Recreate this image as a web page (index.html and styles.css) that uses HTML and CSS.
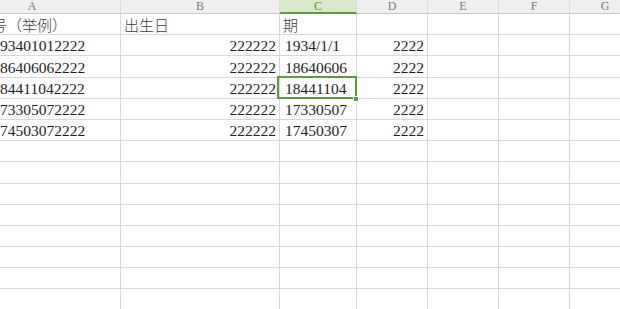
FILE: index.html
```html
<!DOCTYPE html>
<html lang="zh-CN">
<head>
<meta charset="utf-8">
<title>Sheet</title>
<link rel="stylesheet" href="styles.css">
</head>
<body>
<div class="sheet">
  <div class="hd">A</div><div class="hd">B</div><div class="hd hd-sel">C</div><div class="hd">D</div><div class="hd">E</div><div class="hd">F</div><div class="hd">G</div>

  <div class="c cn">身份证号（举例）</div><div class="c cn">出生日</div><div class="c cn">期</div><div class="c"></div><div class="c"></div><div class="c"></div><div class="c"></div>

  <div class="c">110101193401012222</div><div class="c num">222222</div><div class="c txt">1934/1/1</div><div class="c num">2222</div><div class="c"></div><div class="c"></div><div class="c"></div>

  <div class="c">110101186406062222</div><div class="c num">222222</div><div class="c txt">18640606</div><div class="c num">2222</div><div class="c"></div><div class="c"></div><div class="c"></div>

  <div class="c">110101184411042222</div><div class="c num">222222</div><div class="c txt active">18441104<span class="handle"></span></div><div class="c num">2222</div><div class="c"></div><div class="c"></div><div class="c"></div>

  <div class="c">110101173305072222</div><div class="c num">222222</div><div class="c txt">17330507</div><div class="c num">2222</div><div class="c"></div><div class="c"></div><div class="c"></div>

  <div class="c">110101174503072222</div><div class="c num">222222</div><div class="c txt">17450307</div><div class="c num">2222</div><div class="c"></div><div class="c"></div><div class="c"></div>

  <div class="c"></div><div class="c"></div><div class="c"></div><div class="c"></div><div class="c"></div><div class="c"></div><div class="c"></div>
  <div class="c"></div><div class="c"></div><div class="c"></div><div class="c"></div><div class="c"></div><div class="c"></div><div class="c"></div>
  <div class="c"></div><div class="c"></div><div class="c"></div><div class="c"></div><div class="c"></div><div class="c"></div><div class="c"></div>
  <div class="c"></div><div class="c"></div><div class="c"></div><div class="c"></div><div class="c"></div><div class="c"></div><div class="c"></div>
  <div class="c"></div><div class="c"></div><div class="c"></div><div class="c"></div><div class="c"></div><div class="c"></div><div class="c"></div>
  <div class="c"></div><div class="c"></div><div class="c"></div><div class="c"></div><div class="c"></div><div class="c"></div><div class="c"></div>
  <div class="c"></div><div class="c"></div><div class="c"></div><div class="c"></div><div class="c"></div><div class="c"></div><div class="c"></div>
  <div class="c"></div><div class="c"></div><div class="c"></div><div class="c"></div><div class="c"></div><div class="c"></div><div class="c"></div>
</div>
</body>
</html>
```

FILE: styles.css
```css
html, body {
  margin: 0;
  padding: 0;
  background: #ffffff;
  overflow: hidden;
  width: 620px;
  height: 309px;
}

.sheet {
  display: grid;
  grid-template-columns: 177px 159px 77px 71px 71px 71px 71px;
  grid-template-rows: 14px repeat(14, 21.2px);
  margin-left: -56px;
  width: 697px;
}

.hd {
  background: #efefef;
  border-right: 1px solid #dcdcdc;
  border-bottom: 1px solid #c9c9c9;
  color: #7a7a7a;
  font-family: "Liberation Serif", serif;
  font-size: 12px;
  line-height: 13px;
  display: flex;
  justify-content: center;
  align-items: flex-start;
}

.hd-sel {
  background: #d8eacb;
  color: #4f9430;
  border-bottom: 2px solid #5d9d3c;
}

.c {
  border-right: 1px solid #d6d6d6;
  border-bottom: 1px solid #d9d9d9;
  font-family: "Liberation Serif", serif;
  font-size: 15.5px;
  line-height: 15px;
  color: #1e1e1e;
  padding: 0 3px 2px 3px;
  display: flex;
  align-items: flex-end;
  white-space: nowrap;
  overflow: hidden;
  position: relative;
}

.cn {
  font-family: "Noto Sans CJK SC", sans-serif;
  font-size: 15px;
  font-weight: 300;
  color: #3c3c3c;
  padding-bottom: 2px;
}

.num {
  justify-content: flex-end;
}

.txt {
  padding-left: 5px;
}

.active {
  overflow: visible;
  z-index: 2;
}

.active::after {
  content: "";
  position: absolute;
  left: -3px;
  top: -2px;
  right: -1px;
  bottom: -1px;
  border: 2px solid #5b9b3b;
  pointer-events: none;
}

.handle {
  position: absolute;
  right: -3px;
  bottom: -4px;
  width: 4px;
  height: 4px;
  background: #5b9b3b;
  border: 1px solid #ffffff;
  z-index: 3;
}
```
